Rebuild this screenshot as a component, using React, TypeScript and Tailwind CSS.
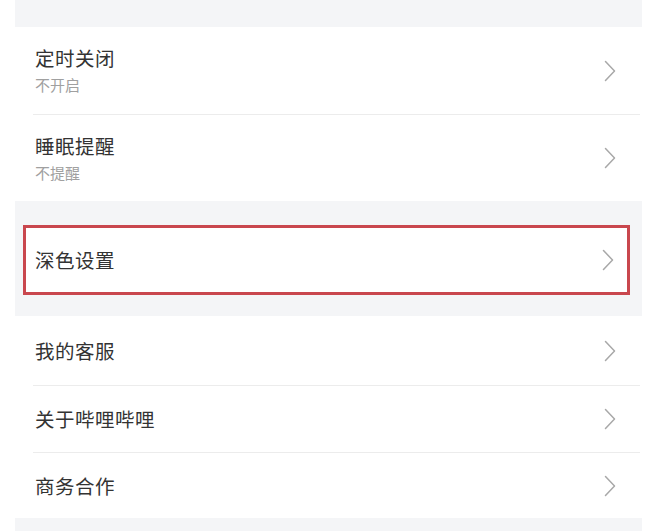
import React from "react";

const Chevron = () => (
  <svg width="12" height="22" viewBox="0 0 12 22" fill="none" className="shrink-0">
    <path d="M1.5 1.5 L10.5 11 L1.5 20.5" stroke="#a8a8a8" strokeWidth="1.5" strokeLinecap="round" strokeLinejoin="round" />
  </svg>
);

const font = { fontFamily: '"Noto Sans CJK SC", "Noto Sans", sans-serif' };

function Row({ title, sub, h }: { title: string; sub?: string; h: string }) {
  return (
    <div className={`flex items-center justify-between pl-[20px] pr-[26px] ${h}`}>
      <div className="flex flex-col">
        <span className="text-[19.5px] leading-[24px] text-[#333333] tracking-[0.5px]">{title}</span>
        {sub && <span className="text-[15px] leading-[20px] mt-[5px] text-[#a0a0a0]">{sub}</span>}
      </div>
      <Chevron />
    </div>
  );
}

const Divider = () => <div className="h-px bg-[#ececec] ml-[18px] mr-[2px]" />;

export default function App() {
  return (
    <div className="w-[651px] h-[531px] bg-white pl-[15px] pr-[9px] overflow-hidden" style={font}>
      <div className="h-full bg-[#f4f5f7] flex flex-col">
        <div className="h-[27px]" />
        <div className="bg-white">
          <Row title="定时关闭" sub="不开启" h="h-[87px]" />
          <Divider />
          <Row title="睡眠提醒" sub="不提醒" h="h-[86px]" />
        </div>
        <div className="pt-[24px] pb-[21px] pl-[8px] pr-[12px]">
          <div className="h-[70px] bg-white border-[3px] border-[#c9474e] flex items-center justify-between pl-[9px] pr-[13px]">
            <span className="text-[19.5px] leading-[24px] text-[#333333] tracking-[0.5px]">深色设置</span>
            <Chevron />
          </div>
        </div>
        <div className="bg-white">
          <Row title="我的客服" h="h-[69px]" />
          <Divider />
          <Row title="关于哔哩哔哩" h="h-[66px]" />
          <Divider />
          <Row title="商务合作" h="h-[65px]" />
        </div>
        <div className="flex-1" />
      </div>
    </div>
  );
}
